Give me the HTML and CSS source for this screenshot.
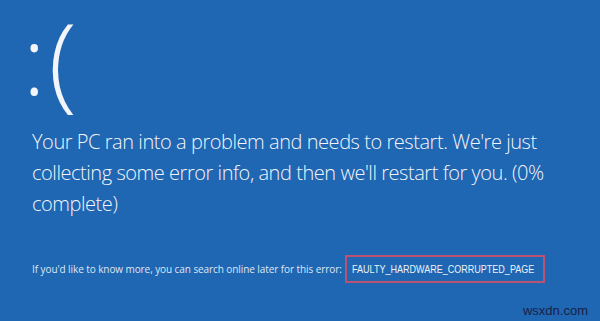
FILE: index.html
```html
<!DOCTYPE html>
<html>
<head>
<meta charset="utf-8">
<link rel="stylesheet" href="styles.css">
</head>
<body>
<main class="screen">
  <div class="face"><span class="colon">:</span><span class="paren">(</span></div>
  <p class="message">Your PC ran into a problem and needs to restart. We're just collecting some error info, and then we'll restart for you. (0% complete)</p>
  <div class="info">
    <span class="hint">If you'd like to know more, you can search online later for this error:</span>
    <span class="code"><span class="code-text">FAULTY_HARDWARE_CORRUPTED_PAGE</span></span>
  </div>
  <div class="footer"><span class="mark">wsxdn.com</span></div>
</main>
</body>
</html>
```
FILE: styles.css
```css
html, body {
  margin: 0;
  padding: 0;
  background: #1f66b3;
}
.screen {
  width: 600px;
  height: 321px;
  box-sizing: border-box;
  padding: 0 0 0 32px;
  display: flex;
  flex-direction: column;
  color: #f2f5fa;
  font-family: "Open Sans", "Noto Sans", sans-serif;
  overflow: hidden;
}
.face {
  display: flex;
  align-items: center;
  margin: 2px 0 0 -9px;
  font-weight: 300;
  line-height: 1.1;
}
.colon {
  font-size: 94px;
}
.paren {
  font-size: 104px;
  margin-left: 3px;
}
.message {
  margin: 10px 0 0 0;
  width: 540px;
  font-size: 20px;
  letter-spacing: -0.45px;
  font-weight: 300;
  line-height: 31px;
}
.info {
  display: flex;
  align-items: center;
  margin-top: 36px;
}
.hint {
  font-size: 10px;
  letter-spacing: -0.08px;
  color: #dfe7f3;
}
.code {
  margin-left: 3px;
  padding: 6px 11px 6px 5px;
  border: 2px solid #b9536f;
  font-family: "Liberation Sans", Arial, sans-serif;
  font-size: 11px;
  width: 180px;
  color: #eef2f8;
  white-space: nowrap;
  line-height: 12px;
}
.code-text {
  display: inline-block;
  transform: scaleX(0.82);
  transform-origin: left center;
}
.footer {
  margin-top: auto;
  display: flex;
  justify-content: flex-end;
  padding: 0 12px 3px 0;
}
.mark {
  font-family: "Liberation Sans", Arial, sans-serif;
  font-size: 13px;
  color: #1b2146;
}
```
